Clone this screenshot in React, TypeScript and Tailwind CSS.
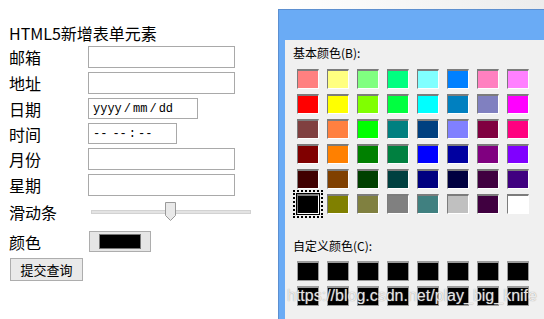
import React from 'react';

const basicColors = [
  ['#FF8080', '#FFFF80', '#80FF80', '#00FF80', '#80FFFF', '#0080FF', '#FF80C0', '#FF80FF'],
  ['#FF0000', '#FFFF00', '#80FF00', '#00FF40', '#00FFFF', '#0080C0', '#8080C0', '#FF00FF'],
  ['#804040', '#FF8040', '#00FF00', '#008080', '#004080', '#8080FF', '#800040', '#FF0080'],
  ['#800000', '#FF8000', '#008000', '#008040', '#0000FF', '#0000A0', '#800080', '#8000FF'],
  ['#400000', '#804000', '#004000', '#004040', '#000080', '#000040', '#400040', '#400080'],
  ['#000000', '#808000', '#808040', '#808080', '#408080', '#C0C0C0', '#400040', '#FFFFFF'],
];

const font = "font-['Noto_Sans_CJK_SC','Noto_Sans',sans-serif]";

const Swatch: React.FC<{ color: string; selected?: boolean }> = ({ color, selected }) => (
  <div className="relative w-[22px] h-[20px]">
    {selected && (
      <>
        <div className="absolute -inset-[4px] border-2 border-dotted border-black" />
        <div className="absolute -inset-[1px] border-2 border-black" />
      </>
    )}
    <div
      className="relative w-[22px] h-[20px] border-t-2 border-l border-r border-b border-t-[#7c7c7c] border-l-[#7c7c7c] border-r-white border-b-white"
      style={{ backgroundColor: color }}
    />
  </div>
);

const CustomSwatch = () => (
  <div className="w-[22px] h-[20px] border border-t-2 border-[#9c9c9c] bg-black" />
);

const Row: React.FC<{ label: string; h: string; children: React.ReactNode }> = ({ label, h, children }) => (
  <div className={`flex items-center ${h}`}>
    <div className="w-[88px] shrink-0 pl-[9px] text-[16px] leading-[20px] text-black">{label}</div>
    {children}
  </div>
);

const TextBox = () => <div className="w-[147px] h-[22px] border border-[#a9a9a9] bg-white" />;

export default function App() {
  return (
    <div className={`relative w-[544px] h-[319px] overflow-hidden bg-white flex ${font}`}>
      {/* form page */}
      <div className="w-[278px] shrink-0 pt-[22px]">
        <div className="pl-[9px] h-[22px] text-[16px] leading-[22px] text-black">HTML5新增表单元素</div>
        <div className="flex flex-col gap-[4px] mt-[2px]">
          <Row label="邮箱" h="h-[22px]"><TextBox /></Row>
          <Row label="地址" h="h-[22px]"><TextBox /></Row>
          <Row label="日期" h="h-[21px]">
            <div className="w-[110px] h-[21px] border border-[#a9a9a9] bg-white flex items-center pl-[4px] font-['Liberation_Mono',monospace] text-[12px] text-black">
              <span>yyyy</span>
              <span className="mx-[2px]">/</span>
              <span>mm</span>
              <span className="mx-[2px]">/</span>
              <span>dd</span>
            </div>
          </Row>
          <Row label="时间" h="h-[21px]">
            <div className="w-[89px] h-[21px] border border-[#a9a9a9] bg-white flex items-center pl-[4px] font-['Liberation_Mono',monospace] text-[12px] text-black">
              <span>--</span>
              <span className="ml-[5px]">--</span>
              <span className="mx-[2px]">:</span>
              <span>--</span>
            </div>
          </Row>
          <Row label="月份" h="h-[22px]"><TextBox /></Row>
          <Row label="星期" h="h-[22px]"><TextBox /></Row>
        </div>
        <div className="mt-[6px]">
          <Row label="滑动条" h="h-[20px]">
            <div className="relative ml-[3px] w-[160px] h-[20px] flex items-center">
              <div className="w-full h-[4px] bg-[#e3e3e3] border border-[#d2d2d2]" />
              <svg className="absolute left-[74px] top-0" width="12" height="20" viewBox="0 0 12 20">
                <polygon points="0.5,0.5 10.5,0.5 10.5,13.5 5.5,18.5 0.5,13.5" fill="#e9e9e9" stroke="#9a9a9a" />
              </svg>
            </div>
          </Row>
        </div>
        <div className="mt-[9px]">
          <Row label="颜色" h="h-[21px]">
            <div className="ml-[1px] w-[62px] h-[21px] border border-[#adadad] bg-[#e6e6e6] flex items-center justify-center">
              <div className="w-[42px] h-[15px] bg-black border border-[#777]" />
            </div>
          </Row>
        </div>
        <button className="mt-[6px] ml-[10px] w-[73px] h-[23px] border border-[#adadad] bg-[#e9e9e9] text-[13px] leading-[20px] text-black">
          提交查询
        </button>
      </div>

      {/* color dialog */}
      <div className="flex-1 flex flex-col bg-gradient-to-r from-white to-[#ececec]">
        <div className="h-[9px] shrink-0" />
        <div className="flex-1 flex flex-col border-t border-l border-[#5c8fd0] bg-[#6aabf5] pl-[6px] pt-[30px]">
          <div className="flex-1 bg-[#f0f0f0] pl-[8px] pt-[5px] text-[12px] text-black">
            <div className="leading-[16px]">基本颜色(B):</div>
            <div className="mt-[8px] ml-[4px] grid grid-cols-[repeat(8,22px)] gap-x-[8px] gap-y-[5px]">
              {basicColors.flatMap((row, r) =>
                row.map((c, i) => <Swatch key={`${r}-${i}`} color={c} selected={r === 5 && i === 0} />)
              )}
            </div>
            <div className="mt-[24px] leading-[16px]">自定义颜色(C):</div>
            <div className="mt-[7px] ml-[4px] grid grid-cols-[repeat(8,22px)] gap-x-[8px] gap-y-[5px]">
              {Array.from({ length: 16 }).map((_, i) => (
                <CustomSwatch key={i} />
              ))}
            </div>
          </div>
        </div>
      </div>

      {/* watermark */}
      <div className="absolute left-[287px] top-[287px] font-['Liberation_Sans',Arial,sans-serif] text-[16px] leading-[18px] text-[#ffffffd0] [text-shadow:0_0_1px_#8a8a8a]">
        https://blog.csdn.net/play_big_knife
      </div>
    </div>
  );
}
